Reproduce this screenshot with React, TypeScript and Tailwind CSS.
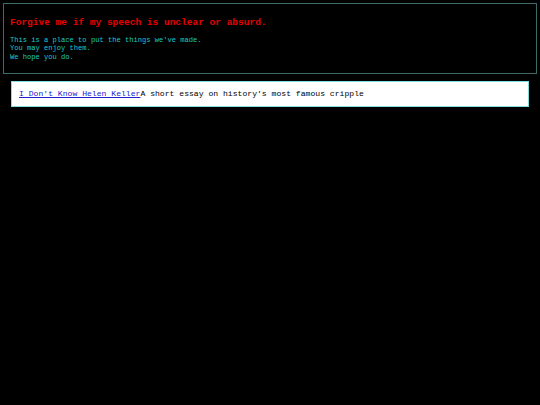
export default function App() {
  return (
    <div className="min-h-[405px] bg-black p-[3px] font-['Liberation_Mono',monospace]">
      <header className="border border-[#3a6a6a] h-[71px] px-[6px] pt-[13px]">
        <h1 className="text-[9.5px] leading-[12px] font-bold text-[#e80000]">
          Forgive me if my speech is unclear or absurd.
        </h1>
        <div className="mt-[7px] text-[7.1px] leading-[8.3px] text-[#1ec8c8]">
          <p>This is a place to put the things we've made.</p>
          <p>You may enjoy them.</p>
          <p>We hope you do.</p>
        </div>
      </header>
      <ul className="mx-[8px] mt-[7px]">
        <li className="h-[26px] bg-white border border-[#7fdede] px-[7px] pt-[1px] flex items-center text-[8.1px] text-black">
          <a href="#" className="text-[#2020d0] underline">
            I Don't Know Helen Keller
          </a>
          <span>A short essay on history's most famous cripple</span>
        </li>
      </ul>
    </div>
  );
}
